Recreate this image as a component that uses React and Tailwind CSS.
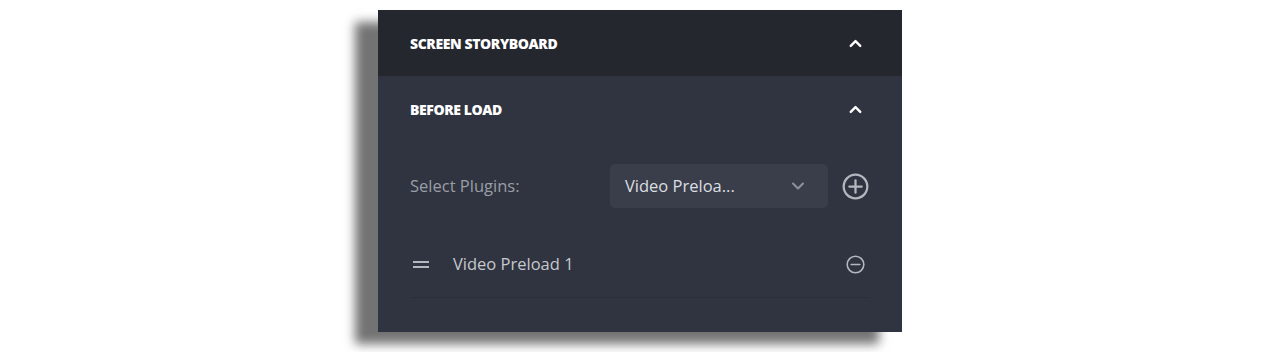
import { ChevronUp, ChevronDown } from 'lucide-react';

function CircleIcon({ size, minus }) {
    return (
        <svg width={size} height={size} viewBox="0 0 24 24" fill="none" stroke="currentColor" strokeWidth="2" strokeLinecap="round">
            <circle cx="12" cy="12" r="10.5" />
            <path d="M6.5 12h11" />
            {!minus && <path d="M12 6.5v11" />}
        </svg>
    );
}

export default function App() {
    return (
        <div className="w-[1280px] h-[352px] bg-white flex justify-center pt-[10px] font-['Open_Sans',sans-serif]">
            <div className="w-[524px] h-[322px] bg-[#2f3440] shadow-[-23px_12px_10px_rgba(0,0,0,0.55)] flex flex-col">
                <div className="h-[66px] bg-[#25272f] flex items-center justify-between pl-8 pr-[37px]">
                    <span className="text-[14px] font-extrabold text-white tracking-[-0.4px]">SCREEN STORYBOARD</span>
                    <ChevronUp size={19} strokeWidth={3} className="text-white" />
                </div>
                <div className="h-[66px] flex items-center justify-between pl-8 pr-[37px]">
                    <span className="text-[14px] font-extrabold text-white tracking-[-0.4px]">BEFORE LOAD</span>
                    <ChevronUp size={19} strokeWidth={3} className="text-white" />
                </div>
                <div className="flex items-center pl-8 pr-[33px] mt-[22px]">
                    <span className="text-[16.5px] text-[#9a9ea6] w-[200px]">Select Plugins:</span>
                    <div className="w-[218px] h-[44px] rounded-[5px] bg-[#393e4a] flex items-center justify-between pl-[15px] pr-[20px]">
                        <span className="text-[16.5px] text-[#dcdee2]">Video Preloa...</span>
                        <ChevronDown size={20} strokeWidth={2.5} className="text-[#8d919a]" />
                    </div>
                    <div className="ml-auto text-[#b4b7be]">
                        <CircleIcon size={27} />
                    </div>
                </div>
                <div className="mx-8 mt-[45px] h-[45px] flex items-start border-b border-[#2a2e38]">
                    <div className="h-[22px] flex items-center w-full">
                        <div className="w-[16px] ml-[3px] flex flex-col gap-[3px]">
                            <div className="h-[2px] bg-[#b4b7be]" />
                            <div className="h-[2px] bg-[#b4b7be]" />
                        </div>
                        <span className="ml-[24px] text-[16.5px] text-[#c6c9ce]">Video Preload 1</span>
                        <div className="ml-auto mr-[5px] text-[#b4b7be]">
                            <CircleIcon size={19} minus />
                        </div>
                    </div>
                </div>
            </div>
        </div>
    );
}
